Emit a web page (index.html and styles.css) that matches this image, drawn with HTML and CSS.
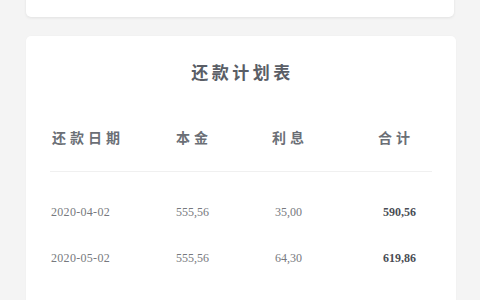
FILE: index.html
```html
<!DOCTYPE html>
<html lang="zh">
<head>
<meta charset="utf-8">
<link rel="stylesheet" href="styles.css">
</head>
<body>
<div class="page">
  <div class="card card-top"></div>
  <div class="card card-plan">
    <h2 class="title">还款计划表</h2>
    <div class="row head">
      <span class="c1">还款日期</span>
      <span class="c2">本金</span>
      <span class="c3">利息</span>
      <span class="c4">合计</span>
    </div>
    <div class="rows">
      <div class="row data">
        <span class="c1">2020-04-02</span>
        <span class="c2">555,56</span>
        <span class="c3">35,00</span>
        <span class="c4 total">590,56</span>
      </div>
      <div class="row data">
        <span class="c1">2020-05-02</span>
        <span class="c2">555,56</span>
        <span class="c3">64,30</span>
        <span class="c4 total">619,86</span>
      </div>
      <div class="row data">
        <span class="c1">2020-06-02</span>
        <span class="c2">555,56</span>
        <span class="c3">61,12</span>
        <span class="c4 total">616,68</span>
      </div>
    </div>
  </div>
</div>
</body>
</html>
```
FILE: styles.css
```css
html, body {
  margin: 0;
  padding: 0;
  background: #f4f4f4;
  overflow: hidden;
}
.page {
  width: 480px;
  height: 300px;
  overflow: hidden;
  display: flex;
  flex-direction: column;
  align-items: flex-start;
}
.card {
  background: #fff;
  border-radius: 5px;
  flex-shrink: 0;
}
.card-top {
  margin-left: 26px;
  width: 428px;
  height: 60px;
  margin-top: -43px;
  box-shadow: 0 1px 3px rgba(0,0,0,0.08);
}
.card-plan {
  margin-top: 19px;
  margin-left: 26px;
  width: 430px;
  padding: 24px 24px 40px;
  box-sizing: border-box;
  box-shadow: 0 0 2px rgba(0,0,0,0.03);
}
.title {
  margin: 0;
  height: 24px;
  line-height: 24px;
  text-align: center;
  font-family: "Noto Sans CJK SC", sans-serif;
  font-size: 17px;
  font-weight: 700;
  letter-spacing: 3.5px;
  padding-left: 3px;
  color: #5a5e66;
}
.row {
  display: grid;
  grid-template-columns: 100px 84px 108px 90px;
  align-items: center;
}
.head {
  margin-top: 39px;
  height: 28px;
  padding-bottom: 20px;
  border-bottom: 1px solid #f0f0f0;
  font-family: "Noto Sans CJK SC", sans-serif;
  font-size: 14px;
  font-weight: 700;
  letter-spacing: 4px;
  color: #6b6f76;
}
.head .c1 { padding-left: 2px; }
.head .c2 { padding-left: 26px; }
.head .c3 { padding-left: 38px; }
.head .c4 { padding-left: 36px; }
.rows {
  margin-top: 17px;
}
.data {
  height: 46px;
  font-family: "Liberation Serif", serif;
  font-size: 12px;
  color: #77797e;
}
.data .c1 { padding-left: 1px; letter-spacing: 0.3px; }
.data .c2 { padding-left: 26px; }
.data .c3 { padding-left: 41px; }
.data .c4 { padding-left: 41px; }
.total {
  font-weight: 700;
  color: #4a4d55;
}
```
